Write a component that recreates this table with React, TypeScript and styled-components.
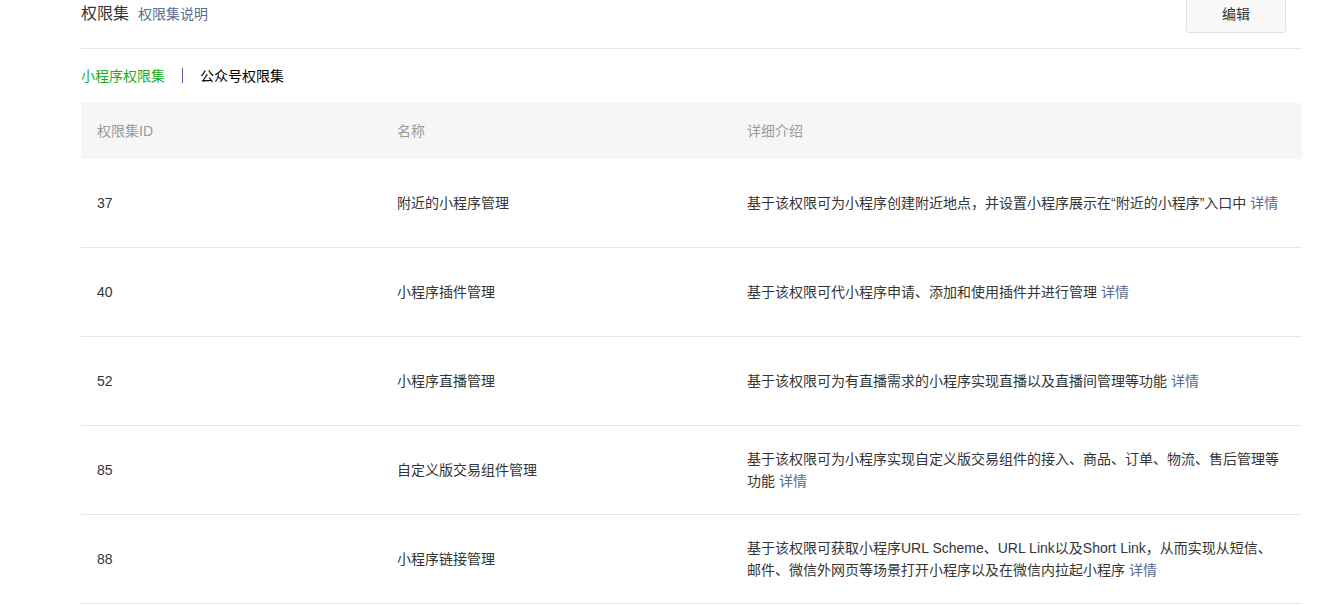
import React from "react";
import styled, { createGlobalStyle } from "styled-components";

const Global = createGlobalStyle`
  html, body { margin: 0; padding: 0; background: #fff; }
  body {
    font-family: "Liberation Sans", "Noto Sans CJK SC", sans-serif;
    font-size: 14px;
    color: #353535;
  }
`;

const Page = styled.div`
  margin: -6px 41px 0 81px;
  width: 1221px;
`;

const TopBar = styled.div`
  display: flex;
  align-items: center;
  justify-content: space-between;
  padding-bottom: 15px;
  border-bottom: 1px solid #e7e7eb;
`;

const TitleGroup = styled.div`
  display: flex;
  align-items: baseline;
  gap: 9px;
  padding-bottom: 3px;
`;

const Title = styled.h2`
  margin: 0;
  font-size: 16px;
  font-weight: 400;
  color: #353535;
`;

const Link = styled.a`
  font-size: 14px;
  color: #576b95;
  text-decoration: none;
  cursor: pointer;
`;

const Button = styled.button`
  width: 100px;
  height: 39px;
  margin-right: 16px;
  border: 1px solid #e0e1e2;
  border-radius: 3px;
  background: #f9f9f9;
  font-family: inherit;
  font-size: 14px;
  color: #353535;
  padding: 0 0 2px 0;
`;

const Tabs = styled.div`
  box-sizing: border-box;
  display: flex;
  align-items: center;
  height: 54px;
  padding-bottom: 2px;
`;

const Tab = styled.span<{ $active?: boolean }>`
  font-size: 14px;
  color: ${(p) => (p.$active ? "#1aad19" : "#000")};
`;

const Sep = styled.span`
  width: 1px;
  height: 15px;
  background: #7048a8;
  margin: 0 17px 0 17px;
`;

const Table = styled.div`
  display: flex;
  flex-direction: column;
`;

const Row = styled.div<{ $head?: boolean }>`
  display: grid;
  grid-template-columns: 300px 350px 1fr;
  align-items: center;
  height: ${(p) => (p.$head ? "56px" : "88px")};
  background: ${(p) => (p.$head ? "#f6f6f6" : "#fff")};
  color: ${(p) => (p.$head ? "#9a9a9a" : "#353535")};
  border-bottom: ${(p) => (p.$head ? "none" : "1px solid #e7e7eb")};
`;

const Cell = styled.div`
  padding: 0 16px;
  font-size: 14px;
  line-height: 22px;
`;

const Desc = styled.div`
  max-width: 535px;
`;

const rows = [
  { id: "37", name: "附近的小程序管理", desc: "基于该权限可为小程序创建附近地点，并设置小程序展示在“附近的小程序”入口中" },
  { id: "40", name: "小程序插件管理", desc: "基于该权限可代小程序申请、添加和使用插件并进行管理" },
  { id: "52", name: "小程序直播管理", desc: "基于该权限可为有直播需求的小程序实现直播以及直播间管理等功能" },
  { id: "85", name: "自定义版交易组件管理", desc: "基于该权限可为小程序实现自定义版交易组件的接入、商品、订单、物流、售后管理等功能" },
  { id: "88", name: "小程序链接管理", desc: "基于该权限可获取小程序URL Scheme、URL Link以及Short Link，从而实现从短信、邮件、微信外网页等场景打开小程序以及在微信内拉起小程序" },
];

export default function App() {
  return (
    <>
      <Global />
      <Page>
        <TopBar>
          <TitleGroup>
            <Title>权限集</Title>
            <Link>权限集说明</Link>
          </TitleGroup>
          <Button>编辑</Button>
        </TopBar>
        <Tabs>
          <Tab $active>小程序权限集</Tab>
          <Sep />
          <Tab>公众号权限集</Tab>
        </Tabs>
        <Table>
          <Row $head>
            <Cell>权限集ID</Cell>
            <Cell>名称</Cell>
            <Cell>详细介绍</Cell>
          </Row>
          {rows.map((r) => (
            <Row key={r.id}>
              <Cell>{r.id}</Cell>
              <Cell>{r.name}</Cell>
              <Cell>
                <Desc>
                  {r.desc} <Link>详情</Link>
                </Desc>
              </Cell>
            </Row>
          ))}
        </Table>
      </Page>
    </>
  );
}
